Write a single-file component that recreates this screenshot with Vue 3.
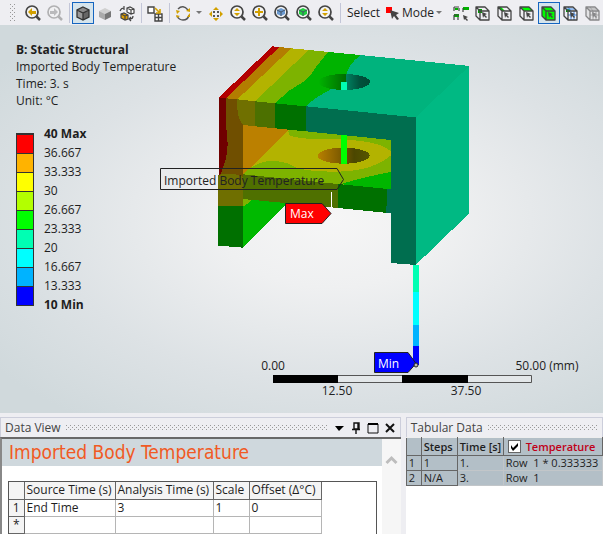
<template>
  <div class="workbench">
    <svg class="symbols" aria-hidden="true">
      <symbol id="lens" viewBox="0 0 22 22">
        <circle cx="10" cy="10" r="6" fill="#f4f4f4" stroke="currentColor" stroke-width="1.700" />
        <path d="M14.500 14.500 18 18" stroke="currentColor" stroke-width="2.500" />
      </symbol>
      <symbol id="arrow" viewBox="0 0 22 22">
        <path d="M6 10l4-4v3h4v3h-4v2z" />
      </symbol>
      <symbol id="cube" viewBox="0 0 22 22">
        <path d="M11 5l6 3v7l-6 3-6-3V8z" fill="#8b8b8b" />
        <path d="M5 8l6 3v7l-6-3z" fill="#999" />
        <path d="M11 11l6-3v7l-6 3z" fill="#666" />
      </symbol>
      <symbol id="pointer" viewBox="0 0 22 22">
        <path d="M10 10l5 2-2 1 2 2-1 1-2-2-1 2z" fill="#444" />
      </symbol>
      <symbol id="wire" viewBox="0 0 22 22">
        <path d="M4 5h9l4 4v9H8l-4-4zM4 5l4 4h9M8 9v9" fill="none" stroke="#444" stroke-width="1.300" stroke-linejoin="round" />
      </symbol>
    </svg>

    <div class="toolbar" role="toolbar" aria-label="Graphics">
      <span class="grip"></span>
      <button class="tool" aria-label="Previous view">
        <svg viewBox="0 0 22 22"><use href="#lens" /><use href="#arrow" fill="#d2a000" /></svg>
      </button>
      <button class="tool faded" aria-label="Next view">
        <svg viewBox="0 0 22 22"><use href="#lens" /><path d="M14 10l-4-4v3H6v3h4v2z" fill="#999" /></svg>
      </button>
      <span class="sep"></span>
      <button class="tool active" aria-label="Shaded with edges" aria-pressed="true">
        <svg viewBox="0 0 22 22"><use href="#cube" /><path d="M11 5l6 3v7l-6 3-6-3V8zM5 8l6 3 6-3M11 11v7" fill="none" stroke="#333" stroke-width="1.3" /></svg>
      </button>
      <button class="tool" aria-label="Shaded">
        <svg viewBox="0 0 22 22"><path d="M11 6l6 3-6 3-6-3z" fill="#d0d0d0" /><path d="M5 9l6 3v6l-6-3z" fill="#aaa" /><path d="M11 12l6-3v6l-6 3z" fill="#777" /></svg>
      </button>
      <button class="tool" aria-label="Swap bodies">
        <svg viewBox="0 0 22 22">
          <path d="M11 6l3-1 4 2v4l-3 1-4-2zM11 6l4 2v4M15 8l3-1" fill="#fff" stroke="#444" stroke-width="1.2" />
          <path d="M5 12l3-1 4 2v4l-3 1-4-2z" fill="#e0a000" stroke="#444" stroke-width="1.2" />
          <path d="M5 12l4 2v4M9 14l3-1M4 9q1-3 4-3M8 4v4M17 14q0 3-3 3M15 15l-2 2 2 2" fill="none" stroke="#444" stroke-width="1.2" />
        </svg>
      </button>
      <span class="sep"></span>
      <button class="tool" aria-label="Window layout">
        <svg viewBox="0 0 22 22">
          <path d="M4 5h6v6H4zM11 12h7v7h-7zM14.500 12v7M11 15.500h7" fill="#fff" stroke="#444" stroke-width="1.400" />
          <path d="M11 6l4 4M16 7v4h-4" fill="none" stroke="#d2a000" stroke-width="1.600" />
        </svg>
      </button>
      <span class="sep"></span>
      <button class="tool" aria-label="Rotate">
        <svg viewBox="0 0 22 22">
          <path d="M6 7q5-5 10 1M17 13q-1 5-6 5-4 0-6-4" fill="none" stroke="#555" stroke-width="1.400" />
          <path d="M4 8l4 1-3 3zM14 9l4-3v4zM15 15l3-4v4zM4 13l4 1-3 2z" fill="#d2a000" />
        </svg>
      </button>
      <span class="caret gap"></span>
      <button class="tool" aria-label="Pan">
        <svg viewBox="0 0 22 22">
          <path d="M11 5l3 3H8zM11 19l3-3H8zM4 12l3-3v6zM18 12l-3-3v6z" fill="#d2a000" />
          <path d="M8 9h2v2H8zM12 9h2v2h-2zM8 13h2v2H8zM12 13h2v2h-2z" fill="#555" />
        </svg>
      </button>
      <button v-for="zoom in zooms" :key="zoom.label" class="tool" :aria-label="zoom.label">
        <svg viewBox="0 0 22 22">
          <use href="#lens" />
          <path :d="zoom.path" :fill="zoom.color" />
          <path v-if="zoom.box" d="M6 8l4 2 4-2M10 10v4" fill="none" stroke="#456" />
        </svg>
      </button>
      <span class="sep"></span>
      <span class="word">Select</span>
      <button class="mode">
        <svg viewBox="0 0 20 22"><path d="M4 5h6v6H4z" fill="red" /><path d="M8 8l9 3-3 2 3 4-2 1-3-4-2 3z" fill="#444" /></svg>
        Mode<span class="caret"></span>
      </button>
      <button class="tool" aria-label="Smart select">
        <svg viewBox="0 0 22 22">
          <path d="M13 5h6v3h-6zM4 12h5v3H4zM5 6h3v2H5z" fill="#00b000" />
          <path d="M4 5h5M4 5v4M4 13h5M4 13v5M13 6v4M9 6v3M8 15v3" fill="none" stroke="#444" stroke-width="1.200" />
          <path d="M13 13l5 2-2 1 2 2-1 1-2-2-1 1z" fill="#444" />
        </svg>
      </button>
      <button
        v-for="filter in filters"
        :key="filter.label"
        class="tool"
        :class="{ active: filter.on }"
        :aria-label="filter.label"
        :aria-pressed="filter.on"
      >
        <svg viewBox="0 0 22 22" :class="{ faded: filter.faded }">
          <path :d="filter.path" :fill="filter.color" />
          <path v-if="filter.mesh" d="M6 7h9M8 13h9M11 9v9M14 9v9M8 5l3 4" fill="none" :stroke="filter.mesh" />
          <use href="#wire" />
          <use href="#pointer" />
        </svg>
      </button>
    </div>

    <main class="viewport">
      <!-- geometry is drawn at triple scale inside the group -->
      <svg class="scene" viewBox="0 25 603 388" preserveAspectRatio="xMinYMin meet">
        <defs>
          <linearGradient id="topHole">
            <stop offset="0" stop-color="#00b300" />
            <stop offset="0.530" stop-color="#006c00" />
            <stop offset="0.540" stop-color="#008060" />
            <stop offset="0.800" stop-color="#00513c" />
            <stop offset="1" stop-color="#004a35" />
          </linearGradient>
          <linearGradient id="shelfHole">
            <stop offset="0" stop-color="#b98000" />
            <stop offset="0.450" stop-color="#7c5a00" />
            <stop offset="0.700" stop-color="#4c4700" />
            <stop offset="1" stop-color="#555500" />
          </linearGradient>
        </defs>
        <g transform="scale(0.333333)" shape-rendering="crispEdges">
          <!-- inner wall and shelf -->
          <path d="M726 373L867 388 729 530z" fill="#bb8000" />
          <path d="M867 388L1176 418V576L726 531z" fill="#b3b300" />
          <path d="M867 388L1176 418V457Q1150 432 1090 424Q1040 417 970 418Q900 417 872 408Q862 402 867 388z" fill="#7db300" />
          <path d="M726 526Q760 490 800 484Q850 481 875 496Q900 515 1010 515Q1120 514 1176 463V576L726 531z" fill="#7db300" />
          <path d="M1176 515Q1090 532 1030 550L1040 562 1176 576z" fill="#00b600" />
          <!-- top face -->
          <path d="M656 293L817 139 838 141 678 295z" fill="#b30000" />
          <path d="M678 295L838 141 874 145 712 298z" fill="#b37d00" />
          <path d="M712 298L874 145 926 150 765 304z" fill="#b3b300" />
          <path d="M765 304L926 150 985 156Q955 190 935 220Q922 240 900 252L867 272 825 310z" fill="#7db300" />
          <path d="M825 310L867 272 900 252Q922 240 935 220Q955 190 985 156L1081 165Q1045 195 1038 225L985 273Q945 292 918 319z" fill="#00b300" />
          <path d="M918 319Q945 292 985 273L1038 225Q1045 195 1081 165L1408 198 1247 352z" fill="#00b37d" />
          <ellipse cx="1033" cy="246" rx="77" ry="24" fill="url(#topHole)" />
          <path d="M1023 246h18v24h-18z" fill="#00ffb3" />
          <!-- front face of the top bar and the two legs -->
          <path d="M918 319L1247 352V795L1173 789V420L918 394z" fill="#006e4f" />
          <path d="M825 310L918 319V394L825 385z" fill="#007000" />
          <path d="M765 304L825 310V385L765 379z" fill="#4c7000" />
          <path d="M712 298L765 304V379L729 375Q708 350 712 298z" fill="#707000" />
          <path d="M678 295L712 298Q708 350 729 375V532L656 535Q683 470 683 430Q674 340 678 295z" fill="#704f00" />
          <path d="M656 293L678 295Q674 340 683 430Q683 480 656 535z" fill="#700000" />
          <path d="M655 525Q690 515 729 530V619H655z" fill="#6f6f00" />
          <path d="M655 619H729V743L655 737z" fill="#007000" />
          <!-- lower inner wall -->
          <path d="M729 594L868 603 729 743z" fill="#00b900" />
          <path d="M729 594L757 597Q748 610 729 619z" fill="#7db300" />
          <!-- shelf edge -->
          <path d="M729 523L1014 552V624L729 597z" fill="#4f7000" />
          <path d="M1014 552L1173 568V640L1014 624z" fill="#007000" />
          <path d="M1161 567L1173 568V640L1159 638z" fill="#006e4f" />
          <!-- right face -->
          <path d="M1247 352L1408 198V640L1247 795z" fill="#00b983" />
          <ellipse cx="1031" cy="467" rx="78" ry="24" fill="url(#shelfHole)" />
          <path d="M1023 405h18v87h-18z" fill="#00ff00" />
          <!-- lower rod -->
          <path d="M1238 795h18v80h-18z" fill="#00ffb3" />
          <path d="M1238 875h18v100h-18z" fill="#00ffff" />
          <path d="M1238 975h18v63h-18z" fill="#00b3ff" />
          <path d="M1238 1038h18v57h-18z" fill="#0000ff" />
          <path d="M994 576V622" stroke="#fff" stroke-width="3" />
        </g>
        <g stroke="#222" stroke-width="1">
          <path d="M160.500 168.500H337L343.500 179.500 337 189.500H160.500z" fill="none" />
          <path d="M285.500 203.500H322L331 213.500 322 223.500H285.500z" fill="red" />
          <path d="M374.500 352.500H408L416 363.500 408 372.500H374.500z" fill="blue" />
          <circle cx="416" cy="365" r="2" fill="#bbb" />
        </g>
        <g class="label">
          <text x="164" y="185">Imported Body Temperature</text>
          <text x="290" y="218" class="light">Max</text>
          <text x="378" y="368" class="light">Min</text>
        </g>
        <path d="M273.500 375.500H531.500V382.500H273.500z" fill="#e3e7e9" stroke="#555" />
        <path d="M273 375h65v8h-65zM402 375h66v8h-66z" />
        <g class="label" text-anchor="middle">
          <text x="273" y="370">0.00</text>
          <text x="337" y="395">12.50</text>
          <text x="466" y="395">37.50</text>
          <text x="547" y="370">50.00 (mm)</text>
        </g>
      </svg>

      <div class="info">
        <strong>B: Static Structural</strong>
        <span>Imported Body Temperature</span>
        <span>Time: 3. s</span>
        <span>Unit: °C</span>
      </div>
      <div class="legend">
        <div class="bands">
          <i v-for="color in bands" :key="color" :style="{ background: color }"></i>
        </div>
        <ul>
          <li v-for="level in levels" :key="level">{{ level }}</li>
        </ul>
      </div>
    </main>

    <div class="panels">
      <section class="panel data-view">
        <header>
          <span>Data View</span>
          <i class="dots"></i>
          <button aria-label="Menu"><svg viewBox="0 0 12 12"><path d="M2 4h9L6 9z" /></svg></button>
          <button aria-label="Pin"><svg viewBox="0 0 12 12"><path d="M4 1h5v6H4zM2 7.500h8M6 7v5M8 1v6" fill="none" stroke="#111" stroke-width="1.400" /></svg></button>
          <button aria-label="Maximize"><svg viewBox="0 0 12 12"><path d="M1 2h10v9H1z" fill="none" stroke="#111" /><path d="M1 1h10v2H1z" /></svg></button>
          <button aria-label="Close"><svg viewBox="0 0 12 12"><path d="M2 2l8 8M10 2l-8 8" stroke="#111" stroke-width="2" /></svg></button>
        </header>
        <div class="sheet">
          <div class="page">
            <h1>Imported Body Temperature</h1>
            <div class="frame">
              <table>
                <thead>
                  <tr>
                    <th class="num"></th>
                    <th class="source">Source Time (s)</th>
                    <th class="analysis">Analysis Time (s)</th>
                    <th class="factor">Scale</th>
                    <th class="offset">Offset (Δ°C)</th>
                  </tr>
                </thead>
                <tbody>
                  <tr><th>1</th><td>End Time</td><td>3</td><td>1</td><td>0</td></tr>
                  <tr><th>*</th><td></td><td></td><td></td><td></td></tr>
                </tbody>
              </table>
            </div>
          </div>
          <button class="scroll" aria-label="Scroll up">
            <svg viewBox="0 0 18 14"><path d="M4 10l5-5 5 5" fill="none" stroke="#bdbdbd" stroke-width="3" /></svg>
          </button>
        </div>
      </section>

      <section class="panel tabular">
        <header>
          <span>Tabular Data</span>
          <i class="dots"></i>
        </header>
        <table>
          <thead>
            <tr>
              <th class="num"></th>
              <th class="steps">Steps</th>
              <th class="time">Time [s]</th>
              <th class="temp">
                <label>
                  <span class="tick">
                    <input v-model="showTemperature" type="checkbox" />
                    <svg v-if="showTemperature" viewBox="0 0 13 13"><path d="M3 5l2 3 5-5v3L5 11 3 8z" /></svg>
                  </span>Temperature
                </label>
              </th>
            </tr>
          </thead>
          <tbody>
            <tr v-for="(row, i) in rows" :key="row.step">
              <th>{{ i + 1 }}</th>
              <th>{{ row.step }}</th>
              <td>{{ row.time }}</td>
              <td>{{ row.value }}</td>
            </tr>
          </tbody>
        </table>
      </section>
    </div>
  </div>
</template>

<script setup>
import { ref } from 'vue'

const showTemperature = ref(true)

const bands = ['#ff0000', '#ffb300', '#ffff00', '#b3ff00', '#00ff00', '#00ffb3', '#00ffff', '#00b3ff', '#0000ff']
const levels = ['40 Max', '36.667', '33.333', '30', '26.667', '23.333', '20', '16.667', '13.333', '10 Min']

const updown = 'M10 6l3 3H7zM10 14l3-3H7z'
const box = 'M10 6l4 2v4l-4 2-4-2V8z'
const zooms = [
  { label: 'Zoom', path: updown, color: '#d2a000' },
  { label: 'Zoom in', path: 'M9 6h2v3h3v2h-3v3H9v-3H6V9h3z', color: '#d2a000' },
  { label: 'Zoom to fit', path: box, color: '#6c9bd2', box: true },
  { label: 'Zoom to selection', path: box, color: '#20d040', box: true },
  { label: 'Box zoom', path: updown, color: '#d2a000' },
]

const filters = [
  { label: 'Vertex', path: 'M6 7h4v4H6z', color: '#00a000' },
  { label: 'Edge', path: 'M4 5h3l4 4H8z', color: '#00d000' },
  { label: 'Face', path: 'M4 5h9l4 4H8z', color: '#00ff00' },
  { label: 'Body', path: 'M4 5h9l4 4v9H8l-4-4z', color: '#00ff00', on: true },
  { label: 'Node', path: 'M6 7h4v3H6z', color: '#00a000', mesh: '#3c88e8' },
  { label: 'Element', path: 'M4 5h9l4 4v9H8l-4-4z', color: '#ddd', mesh: '#777', faded: true },
]

const rows = [
  { step: '1', time: '1.', value: 'Row  1 * 0.333333' },
  { step: 'N/A', time: '3.', value: 'Row  1' },
]
</script>

<style>
body {
  background: #eeeef2;
}
</style>

<style scoped>
.workbench {
  display: flex;
  flex-direction: column;
  min-height: 100vh;
  font-family: "Open Sans", "Noto Sans", sans-serif;
  font-size: 12px;
  color: #1e1e1e;
}
button {
  padding: 0;
  border: 0;
  background: none;
  font: inherit;
  color: inherit;
}
svg {
  display: block;
}
.symbols {
  position: absolute;
  width: 0;
  height: 0;
}

/* toolbar */
.toolbar {
  display: flex;
  align-items: center;
  height: 25px;
  padding-left: 10px;
  background: #eeeef2;
  overflow: hidden;
}
.toolbar > * {
  flex-shrink: 0;
}
.grip,
.dots {
  background:
    conic-gradient(at 1px 1px, transparent 75%, #999 0) 0 0 / 4px 4px,
    conic-gradient(at 1px 1px, transparent 75%, #999 0) 2px 2px / 4px 4px;
}
.grip {
  width: 6px;
  height: 18px;
  margin-right: 6px;
}
.tool {
  box-sizing: border-box;
  width: 22px;
  height: 22px;
  color: #444;
}
.tool svg {
  width: 22px;
  height: 22px;
}
.tool.active {
  border: 1px solid #1565c0;
  background: #d5e4ec;
}
.tool.active svg {
  margin: -1px;
}
.faded {
  opacity: 0.6;
}
.tool.faded {
  color: #888;
}
.sep {
  width: 1px;
  height: 20px;
  margin: 0 2px 0 3px;
  background: #c3c6d8;
}
.caret {
  display: inline-block;
  border: 3px solid transparent;
  border-top-color: #777;
  border-bottom: 0;
}
.caret.gap {
  margin: 0 3px 0 2px;
}
.word {
  width: 35px;
  margin-left: 4px;
}
.mode {
  display: flex;
  align-items: center;
  width: 68px;
}
.mode svg {
  width: 20px;
  height: 22px;
}
.mode .caret {
  margin-left: 2px;
}

/* graphics window */
.viewport {
  position: relative;
  box-sizing: border-box;
  min-height: 388px;
  padding: 16px;
  background: radial-gradient(ellipse at 55% 50%, #f6f6f6 0%, #eff0f1 25%, #dde2e5 60%, #d0d9dc 90%);
}
.scene {
  position: absolute;
  top: 0;
  left: 0;
  width: 100%;
}
.label {
  font-size: 12px;
  fill: #222;
}
.label .light {
  fill: #fff;
}
.info {
  position: relative;
  display: flex;
  flex-direction: column;
  line-height: 17px;
}
.legend {
  position: relative;
  display: flex;
  gap: 10px;
  margin-top: 15px;
}
.legend ul {
  margin: 0;
  padding: 0;
  list-style: none;
  line-height: 19px;
}
.legend li:first-child,
.legend li:last-child {
  font-weight: 700;
}
.bands {
  box-sizing: border-box;
  width: 18px;
  height: 173px;
  margin-top: 9px;
  border: 1px solid #333;
  border-top-width: 2px;
}
.bands i {
  display: block;
  box-sizing: border-box;
  height: 19px;
  border-bottom: 1px solid #333;
}

/* docked panels */
.panels {
  display: grid;
  grid-template-columns: 67fr 33fr;
  gap: 5px;
  flex: 1;
  padding-top: 4px;
}
.panel {
  display: flex;
  flex-direction: column;
  min-width: 0;
  background: #fff;
  overflow: hidden;
}
.panel header {
  display: flex;
  align-items: center;
  gap: 5px;
  box-sizing: border-box;
  height: 20px;
  padding: 0 4px;
  border: 1px solid #cccedb;
  border-bottom: 0;
  background: #eeeef2;
  color: #444;
  white-space: nowrap;
}
.dots {
  flex: 1;
  height: 5px;
}
.panel header svg {
  width: 12px;
  height: 12px;
}
table {
  border-collapse: collapse;
  table-layout: fixed;
}
th,
td {
  box-sizing: border-box;
  padding: 0 2px;
  font-weight: 400;
  text-align: left;
  white-space: pre;
}
.sheet {
  display: flex;
  flex: 1;
  border-top: 2px solid #696969;
  border-left: 2px solid #888;
}
.page {
  display: flex;
  flex-direction: column;
  flex: 1;
  min-width: 0;
}
.scroll {
  align-self: stretch;
  display: flex;
  width: 19px;
  padding-top: 14px;
  background: #f6f6f6;
}
.scroll svg {
  width: 19px;
  height: 14px;
}
h1 {
  height: 27px;
  margin: 0 0 15px;
  padding-left: 7px;
  background: #cfd8dd;
  color: #f15a24;
  font: 400 19px/27px "DejaVu Sans Condensed", "DejaVu Sans", sans-serif;
  white-space: nowrap;
}
.frame {
  flex: 1;
  margin: 0 5px 0 6px;
  border: 1px solid #555;
  border-bottom: 0;
}
.frame table {
  width: 313px;
}
.frame tr {
  height: 17px;
}
.frame th,
.frame td {
  border: 1px solid #b5b5b5;
  border-top: 0;
  border-left: 0;
  line-height: 16px;
}
.frame th {
  border-color: #666;
  background: #f4f4f4;
}
.frame tbody th,
.frame .num {
  padding: 0;
  text-align: center;
}
.frame .num { width: 15px; }
.frame .source { width: 91px; }
.frame .analysis { width: 98px; }
.frame .factor { width: 36px; }

.tabular table {
  width: 100%;
  background: #b3bfc7;
  font-size: 11px;
}
.tabular tr {
  height: 15px;
}
.tabular thead tr {
  height: 18px;
}
.tabular th,
.tabular td {
  border: 1px solid #c2c6c9;
  line-height: 14px;
}
.tabular thead th,
.tabular tbody th {
  border-color: #666;
  border-top-color: #eee;
}
.tabular thead th {
  font-weight: 600;
}
.tabular .num { width: 15px; }
.tabular .steps { width: 36px; }
.tabular .time { width: 46px; }
.tabular .temp {
  color: #c00018;
  white-space: nowrap;
}
.tabular label {
  display: flex;
  align-items: center;
  gap: 5px;
}
.tick {
  display: grid;
  margin-left: 2px;
}
.tick > * {
  grid-area: 1 / 1;
  box-sizing: border-box;
  width: 13px;
  height: 13px;
}
.tick input {
  appearance: none;
  margin: 0;
  border: 1px solid #666;
  background: #fff;
}
.tick svg {
  pointer-events: none;
}
</style>
